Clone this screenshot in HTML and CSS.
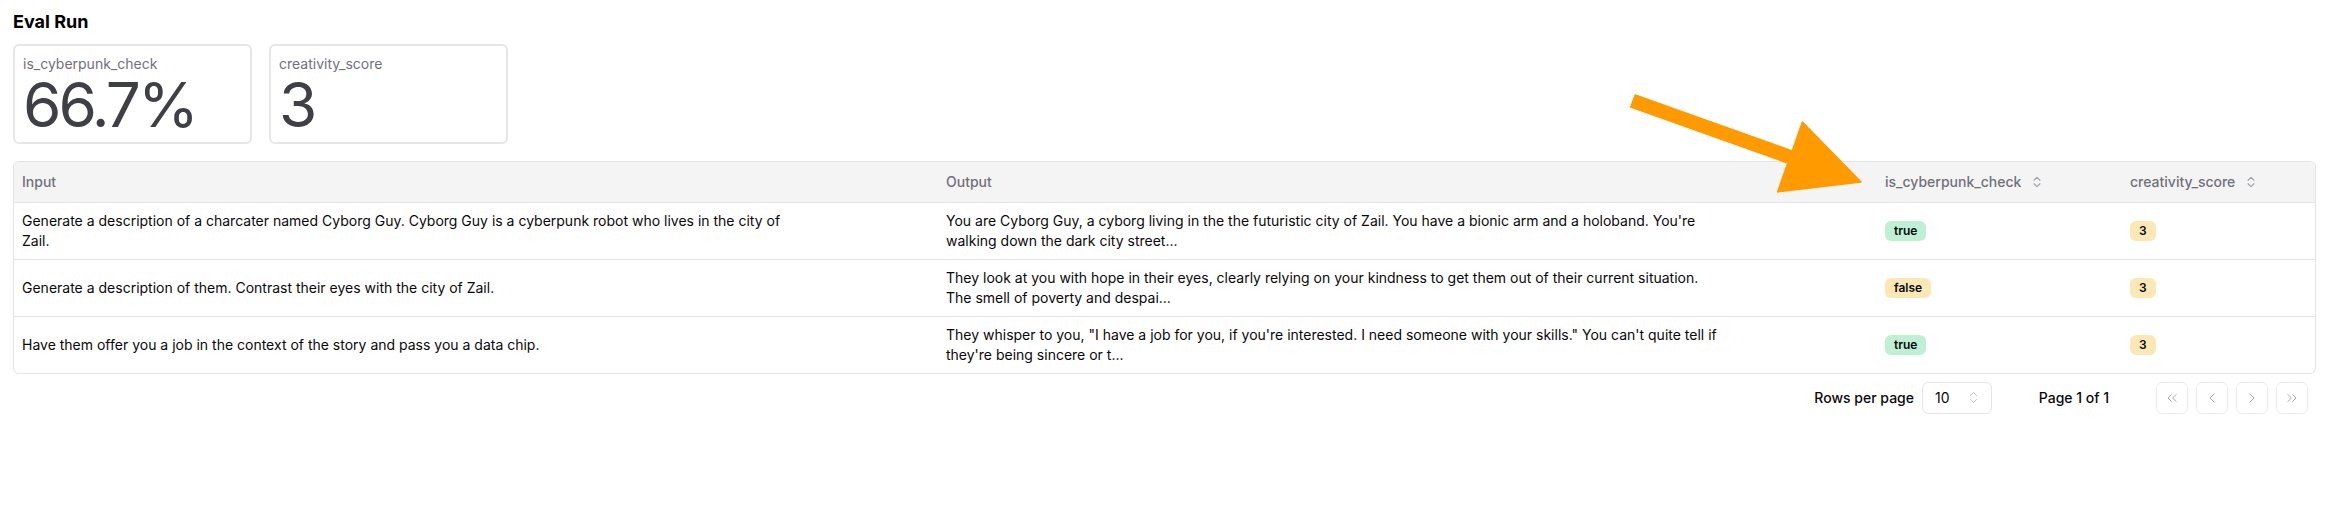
FILE: index.html
```html
<!DOCTYPE html>
<html lang="en">
<head>
<meta charset="utf-8">
<title>Eval Run</title>
<link rel="stylesheet" href="styles.css">
</head>
<body>
<div class="page">
  <h1 class="title">Eval Run</h1>
  <div class="metrics">
    <div class="metric">
      <div class="metric-label">is_cyberpunk_check</div>
      <div class="metric-value">66.7%</div>
    </div>
    <div class="metric">
      <div class="metric-label">creativity_score</div>
      <div class="metric-value">3</div>
    </div>
  </div>

  <div class="table-wrap">
    <table class="table">
      <colgroup>
        <col class="c-input">
        <col class="c-output">
        <col class="c-check">
        <col class="c-score">
      </colgroup>
      <thead>
        <tr>
          <th>Input</th>
          <th>Output</th>
          <th><span class="sort">is_cyberpunk_check<svg class="sort-icon" viewBox="0 0 24 24"><path d="m7 15 5 5 5-5"/><path d="m7 9 5-5 5 5"/></svg></span></th>
          <th><span class="sort">creativity_score<svg class="sort-icon" viewBox="0 0 24 24"><path d="m7 15 5 5 5-5"/><path d="m7 9 5-5 5 5"/></svg></span></th>
        </tr>
      </thead>
      <tbody>
        <tr>
          <td><div class="cell-text">Generate a description of a charcater named Cyborg Guy. Cyborg Guy is a cyberpunk robot who lives in the city of Zail.</div></td>
          <td><div class="cell-text">You are Cyborg Guy, a cyborg living in the the futuristic city of Zail. You have a bionic arm and a holoband. You're walking down the dark city street...</div></td>
          <td><span class="badge badge-green">true</span></td>
          <td><span class="badge badge-yellow">3</span></td>
        </tr>
        <tr>
          <td><div class="cell-text">Generate a description of them. Contrast their eyes with the city of Zail.</div></td>
          <td><div class="cell-text">They look at you with hope in their eyes, clearly relying on your kindness to get them out of their current situation. The smell of poverty and despai...</div></td>
          <td><span class="badge badge-yellow">false</span></td>
          <td><span class="badge badge-yellow">3</span></td>
        </tr>
        <tr>
          <td><div class="cell-text">Have them offer you a job in the context of the story and pass you a data chip.</div></td>
          <td><div class="cell-text">They whisper to you, "I have a job for you, if you're interested. I need someone with your skills." You can't quite tell if they're being sincere or t...</div></td>
          <td><span class="badge badge-green">true</span></td>
          <td><span class="badge badge-yellow">3</span></td>
        </tr>
      </tbody>
    </table>
  </div>

  <div class="pager">
    <div class="rows-group">
      <span class="pager-text">Rows per page</span>
      <div class="select">
        <span>10</span>
        <svg class="select-icon" viewBox="0 0 24 24"><path d="m7 15 5 5 5-5"/><path d="m7 9 5-5 5 5"/></svg>
      </div>
    </div>
    <div class="page-label">Page 1 of 1</div>
    <div class="nav">
      <div class="nav-btn"><svg viewBox="0 0 24 24"><path d="m11 17-5-5 5-5"/><path d="m18 17-5-5 5-5"/></svg></div>
      <div class="nav-btn"><svg viewBox="0 0 24 24"><path d="m15 18-6-6 6-6"/></svg></div>
      <div class="nav-btn"><svg viewBox="0 0 24 24"><path d="m9 18 6-6-6-6"/></svg></div>
      <div class="nav-btn"><svg viewBox="0 0 24 24"><path d="m6 17 5-5-5-5"/><path d="m13 17 5-5-5-5"/></svg></div>
    </div>
  </div>
</div>

<svg class="arrow" viewBox="0 0 2331 510" width="2331" height="510">
  <polygon points="1635.2,94.9 1792.2,150.9 1802.4,122.1 1861,182 1777.6,191.9 1787.8,163.1 1630.8,107.1" />
</svg>
</body>
</html>
```

FILE: styles.css
```css
* { box-sizing: border-box; }

html, body {
  margin: 0;
  background: #ffffff;
}

body {
  font-family: Inter, "Noto Sans", "Liberation Sans", sans-serif;
  color: #09090b;
  position: relative;
  width: 2331px;
  height: 510px;
  overflow: hidden;
}

.page {
  padding: 8px 15px 0 13px;
}

.title {
  margin: 0 0 8px 0;
  font-size: 18px;
  line-height: 28px;
  font-weight: 700;
  color: #000;
}

.metrics {
  display: flex;
  gap: 17px;
}

.metric {
  width: 239px;
  border: 2px solid #e6e6e8;
  border-radius: 6px;
  padding: 8px 8px 6px 8px;
}

.metric-label {
  font-size: 14px;
  line-height: 20px;
  color: #71717a;
}

.metric-value {
  font-size: 62px;
  line-height: 62px;
  letter-spacing: -3px;
  color: #3f3f46;
  font-weight: 400;
}

.table-wrap {
  margin-top: 17px;
  border: 1px solid #e4e4e7;
  border-radius: 6px;
  overflow: hidden;
}

.table {
  width: 100%;
  border-collapse: collapse;
  table-layout: fixed;
}

.c-input { width: 924px; }
.c-output { width: 939px; }
.c-check { width: 245px; }

.table th {
  height: 40px;
  background: #f4f4f5;
  text-align: left;
  padding: 0 8px;
  font-size: 14px;
  font-weight: 500;
  color: #71717a;
  border-bottom: 1px solid #e4e4e7;
}

.table td {
  height: 56px;
  padding: 8px;
  font-size: 14px;
  line-height: 20px;
  vertical-align: middle;
  border-bottom: 1px solid #e4e4e7;
}

.table tbody tr:last-child td {
  border-bottom: none;
}

.cell-text {
  max-width: 774px;
}

.sort {
  display: inline-flex;
  align-items: center;
}

.sort-icon {
  width: 14px;
  height: 14px;
  margin-left: 9px;
  fill: none;
  stroke: #a1a1aa;
  stroke-width: 2;
  stroke-linecap: round;
  stroke-linejoin: round;
}

.badge {
  display: inline-flex;
  align-items: center;
  padding: 1px 8px;
  border: 1px solid transparent;
  border-radius: 6px;
  font-size: 12px;
  line-height: 16px;
  font-weight: 600;
  color: #09090b;
}

.badge-green { background: #bff0d4; }
.badge-yellow { background: #fbe8b4; }

.pager {
  display: flex;
  justify-content: flex-end;
  align-items: center;
  padding: 8px 8px 0 0;
}

.rows-group {
  display: flex;
  align-items: center;
  gap: 8px;
}

.pager-text {
  font-size: 14px;
  font-weight: 500;
}

.select {
  width: 70px;
  height: 32px;
  border: 1px solid #e4e4e7;
  border-radius: 6px;
  padding: 0 10px 0 12px;
  display: flex;
  align-items: center;
  justify-content: space-between;
  font-size: 14px;
}

.select-icon {
  width: 15px;
  height: 15px;
  fill: none;
  stroke: #a1a1aa;
  stroke-width: 1.6;
  stroke-linecap: round;
  stroke-linejoin: round;
  opacity: 0.6;
}

.page-label {
  width: 100px;
  margin: 0 32px;
  display: flex;
  justify-content: center;
  font-size: 14px;
  font-weight: 500;
}

.nav {
  display: flex;
  gap: 8px;
}

.nav-btn {
  width: 32px;
  height: 32px;
  border: 1px solid #e0e0e4;
  border-radius: 6px;
  display: flex;
  align-items: center;
  justify-content: center;
  opacity: 0.6;
}

.nav-btn svg {
  width: 16px;
  height: 16px;
  fill: none;
  stroke: #6b6b73;
  stroke-width: 1.4;
  stroke-linecap: round;
  stroke-linejoin: round;
}

.arrow {
  position: absolute;
  left: 0;
  top: 0;
  pointer-events: none;
}

.arrow polygon {
  fill: #ff9a00;
  stroke: #ff9a00;
  stroke-width: 1.5;
  stroke-linejoin: round;
}
```
